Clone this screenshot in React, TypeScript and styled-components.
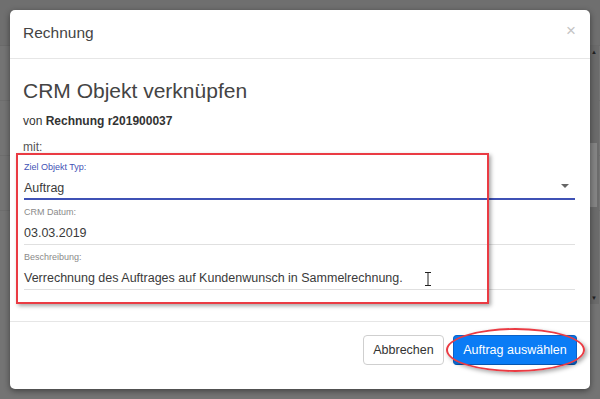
import styled, { createGlobalStyle } from 'styled-components'

const GlobalStyle = createGlobalStyle`
  html, body {
    margin: 0;
    padding: 0;
    width: 600px;
    height: 399px;
    overflow: hidden;
    font-family: 'Liberation Sans', Arial, sans-serif;
  }
`

const fields = [
  { label: 'Ziel Objekt Typ:', value: 'Auftrag', focused: true, select: true },
  { label: 'CRM Datum:', value: '03.03.2019', focused: false, select: false },
  {
    label: 'Beschreibung:',
    value: 'Verrechnung des Auftrages auf Kundenwunsch in Sammelrechnung.',
    focused: false,
    select: false,
  },
]

export default function App() {
  return (
    <>
      <GlobalStyle />
      <Backdrop>
        <PageBehind>
          <TopBar />
          <PageRow />
          <PageRow />
          <PageRow />
        </PageBehind>
        <Scrollbar>
          <ScrollArrow>▲</ScrollArrow>
          <ScrollTrack>
            <ScrollThumb />
          </ScrollTrack>
          <ScrollArrow>▼</ScrollArrow>
        </Scrollbar>
        <Modal>
          <Header>
            <HeaderTitle>Rechnung</HeaderTitle>
            <CloseButton>×</CloseButton>
          </Header>
          <Body>
            <Title>CRM Objekt verknüpfen</Title>
            <Subline>
              von <b>Rechnung r201900037</b>
            </Subline>
            <Mit>mit:</Mit>
            {fields.map((f) => (
              <Field key={f.label}>
                <Label $focused={f.focused}>{f.label}</Label>
                <ValueRow $focused={f.focused}>
                  <Value>{f.value}</Value>
                  {f.select && <Caret />}
                </ValueRow>
              </Field>
            ))}
          </Body>
          <Footer>
            <CancelButton>Abbrechen</CancelButton>
            <PrimaryButton>Auftrag auswählen</PrimaryButton>
          </Footer>
          <HighlightBox />
          <HighlightEllipse />
          <TextCursor width="8" height="14" viewBox="0 0 8 14">
            <path d="M1 0.5h6M1 13.5h6M4 0.5v13" stroke="#222" strokeWidth="1" fill="none" />
          </TextCursor>
        </Modal>
      </Backdrop>
    </>
  )
}

const Backdrop = styled.div`
  position: relative;
  width: 600px;
  height: 399px;
  background: #747474;
  padding: 10px;
  box-sizing: border-box;
  overflow: hidden;
`

const PageBehind = styled.div`
  position: absolute;
  inset: 0;
  display: flex;
  flex-direction: column;
`

const TopBar = styled.div`
  height: 45px;
  background: #6f6f6f;
  border-bottom: 1px solid #6a6a6a;
`

const PageRow = styled.div`
  height: 54px;
  border-bottom: 1px solid #6d6d6d;
`

const Scrollbar = styled.div`
  position: absolute;
  right: 1px;
  top: 46px;
  width: 10px;
  height: 258px;
  background: #6b6b6b;
  display: flex;
  flex-direction: column;
`

const ScrollArrow = styled.div`
  height: 12px;
  font-size: 6px;
  line-height: 12px;
  text-align: center;
  color: #222;
`

const ScrollTrack = styled.div`
  flex: 1;
  padding-top: 85px;
`

const ScrollThumb = styled.div`
  width: 7px;
  margin-left: 1px;
  height: 64px;
  background: #858585;
`

const Modal = styled.div`
  position: relative;
  width: 580px;
  height: 379px;
  background: #fff;
  border-radius: 5px;
  box-shadow: 0 2px 6px rgba(0, 0, 0, 0.45);
  display: flex;
  flex-direction: column;
  color: #444;
`

const Header = styled.div`
  height: 48px;
  border-bottom: 1px solid #e6e6e6;
  display: flex;
  align-items: center;
  justify-content: space-between;
  padding: 0 13px;
`

const HeaderTitle = styled.div`
  font-size: 15.5px;
  color: #444;
  margin-top: -2px;
`

const CloseButton = styled.div`
  font-size: 17px;
  color: #c4c4c4;
  margin-top: -6px;
  margin-right: 1px;
`

const Body = styled.div`
  flex: 1;
  padding: 0 15px 0 13px;
  display: flex;
  flex-direction: column;
`

const Title = styled.div`
  margin-top: 19px;
  font-size: 21px;
  line-height: 26px;
  color: #444;
`

const Subline = styled.div`
  margin-top: 9px;
  font-size: 12px;
  line-height: 16px;
  color: #333;
  b {
    font-weight: bold;
  }
`

const Mit = styled.div`
  margin-top: 10px;
  font-size: 12px;
  line-height: 16px;
  color: #555;
`

const Field = styled.div`
  margin-top: 6px;
  padding-left: 1px;
  display: flex;
  flex-direction: column;
`

const Label = styled.div<{ $focused: boolean }>`
  font-size: 9px;
  line-height: 12px;
  color: ${(p) => (p.$focused ? '#3f51b5' : '#8a8a8a')};
`

const ValueRow = styled.div<{ $focused: boolean }>`
  display: flex;
  align-items: center;
  justify-content: space-between;
  padding: 6px 0 ${(p) => (p.$focused ? '1px' : '2px')};
  border-bottom: ${(p) => (p.$focused ? '2px solid #3f51b5' : '1px solid #e0e0e0')};
`

const Value = styled.div`
  font-size: 12.5px;
  line-height: 18px;
  color: #3a3a3a;
`

const Caret = styled.div`
  width: 0;
  height: 0;
  border-left: 4px solid transparent;
  border-right: 4px solid transparent;
  border-top: 4px solid #666;
  margin-right: 6px;
  margin-top: -4px;
`

const Footer = styled.div`
  border-top: 1px solid #e6e6e6;
  display: flex;
  justify-content: flex-end;
  gap: 9px;
  padding: 13px 13px 24px;
`

const BaseButton = styled.button`
  height: 30px;
  font-family: 'Liberation Sans', Arial, sans-serif;
  font-size: 12.5px;
  border-radius: 4px;
  padding: 0;
  white-space: nowrap;
  cursor: pointer;
`

const CancelButton = styled(BaseButton)`
  width: 81px;
  background: #fff;
  color: #333;
  border: 1px solid #cfcfcf;
`

const PrimaryButton = styled(BaseButton)`
  width: 124px;
  background: #0a7cf5;
  color: #fff;
  border: 1px solid #0a62c8;
  border-bottom-color: #0656b0;
`

const HighlightBox = styled.div`
  position: absolute;
  left: 6px;
  top: 143px;
  width: 469px;
  height: 147px;
  border: 2px solid #ea3b43;
  box-shadow: 2px 2px 4px rgba(0, 0, 0, 0.35);
  pointer-events: none;
`

const HighlightEllipse = styled.div`
  position: absolute;
  left: 436px;
  top: 318px;
  width: 135px;
  height: 40px;
  border: 2px solid #ea3b43;
  border-radius: 50%;
  box-shadow: 2px 2px 4px rgba(0, 0, 0, 0.35);
  pointer-events: none;
`

const TextCursor = styled.svg`
  position: absolute;
  left: 414px;
  top: 262px;
`
